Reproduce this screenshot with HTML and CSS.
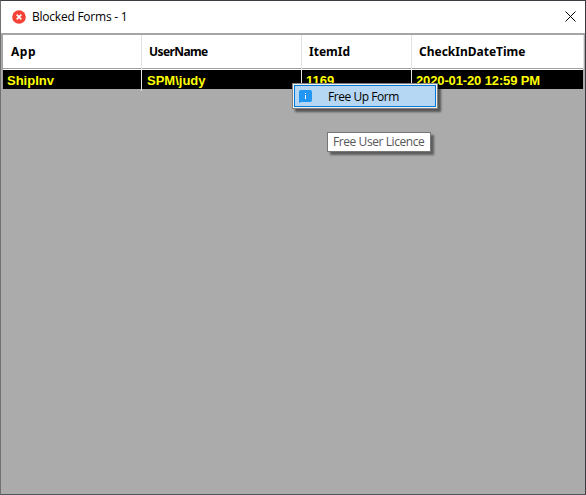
FILE: index.html
```html
<!DOCTYPE html>
<html lang="en">
<head>
<meta charset="utf-8">
<title>Blocked Forms</title>
<link rel="stylesheet" href="styles.css">
</head>
<body>
<main class="window">
  <header class="titlebar">
    <svg class="error-icon" width="14" height="14" viewBox="0 0 14 14"><circle cx="7" cy="7" r="6.8" fill="#f44336"/><path d="M4.7 4.7l4.6 4.6M9.3 4.7L4.7 9.3" stroke="#fff" stroke-width="1.7"/></svg>
    <h1 class="title"><span>Blocked Forms - 1</span></h1>
    <svg class="close" width="11" height="11" viewBox="0 0 11 11"><path d="M.5.5l10 10M10.5.5l-10 10" stroke="#000" stroke-width="1"/></svg>
  </header>
  <section class="grid">
    <div class="row head">
      <div class="cell"><span class="h-app">App</span></div>
      <div class="cell"><span class="h-user">UserName</span></div>
      <div class="cell"><span class="h-item">ItemId</span></div>
      <div class="cell"><span class="h-date">CheckInDateTime</span></div>
    </div>
    <div class="row record">
      <div class="cell"><span>ShipInv</span></div>
      <div class="cell"><span>SPM\judy</span></div>
      <div class="cell"><span>1169</span></div>
      <div class="cell"><span class="timestamp">2020-01-20 12:59 PM</span></div>
    </div>
  </section>
  <div class="menu">
    <div class="menu-item">
      <svg class="info-icon" width="13" height="13" viewBox="0 0 13 13"><path d="M2 0h9a2 2 0 0 1 2 2v8a2 2 0 0 1-2 2H2l-2 1V2a2 2 0 0 1 2-2z" fill="#2196f3"/><path d="M6 3h1v1H6zM6 5h1v4H6z" fill="#fff"/></svg>
      <span class="menu-label">Free Up Form</span>
    </div>
  </div>
  <div class="tooltip"><span>Free User Licence</span></div>
</main>
</body>
</html>
```
FILE: styles.css
```css
* { box-sizing: border-box; }
body { margin: 0; }
.window {
  position: relative;
  width: 586px;
  height: 495px;
  overflow: hidden;
  background: #ababab;
  border: 1px solid #3c3b42;
  border-left-color: #707070;
  border-bottom-color: #55545b;
  font-family: "Open Sans", sans-serif;
  font-size: 12px;
  white-space: nowrap;
}
.titlebar {
  display: flex;
  align-items: center;
  height: 32px;
  padding: 0 9px 2px 11px;
  background: #fff;
}
.title {
  flex: 1;
  margin: 2px 0 0 6px;
  font-size: 12px;
  font-weight: 400;
  line-height: 18px;
  letter-spacing: -.23px;
}
.error-icon, .close { display: block; }
.error-icon { margin-top: 1px; }
.grid {
  border-top: 2px solid #a5a5a5;
  border-left: 1px solid #a0a0a0;
  margin-left: 1px;
  width: 582px;
}
.row {
  display: grid;
  grid-template-columns: 139px 160px 110px 172px;
}
.head {
  height: 34px;
  background: #fff;
  border-bottom: 1px solid #a0a0a0;
  font-family: "Noto Sans", sans-serif;
  font-weight: 700;
}
.head .cell {
  border-right: 1px solid #e3e3e3;
  padding-left: 7px;
  line-height: 34px;
}
.head .cell:first-child { padding-left: 8px; }
.h-app { letter-spacing: .5px; }
.h-user { letter-spacing: -.6px; }
.record {
  width: 580px;
  grid-template-columns: 139px 160px 110px 171px;
  height: 20px;
  background: #000;
  border-top: 1px solid #fff;
  color: #ff0;
  font: 700 13px "Liberation Sans", sans-serif;
}
.record .cell {
  border-right: 1px solid #e3e3e3;
  padding-left: 4px;
  line-height: 21px;
}
.record .cell:nth-child(2) { padding-left: 5px; }
.record .cell:last-child { border-right: 0; }
.timestamp { letter-spacing: -.13px; }
.menu {
  position: absolute;
  left: 291px;
  top: 82px;
  width: 146px;
  height: 26px;
  padding: 1px;
  border: 1px solid #808080;
  background: #f2f2f2;
  box-shadow: 3px 3px 2px rgba(0, 0, 0, .5);
}
.menu-item {
  display: flex;
  align-items: center;
  height: 22px;
  padding-left: 4px;
  border: 1px solid #0078d7;
  background: #b5d7f3;
}
.menu-label {
  margin: 1px 0 0 16px;
  line-height: 20px;
  letter-spacing: -.45px;
}
.tooltip {
  position: absolute;
  left: 326px;
  top: 131px;
  width: 104px;
  height: 20px;
  padding-left: 5px;
  border: 1px solid #767676;
  background: #fff;
  color: #575757;
  line-height: 18px;
  letter-spacing: -.42px;
  box-shadow: 3px 3px 2px rgba(0, 0, 0, .45);
}
```
